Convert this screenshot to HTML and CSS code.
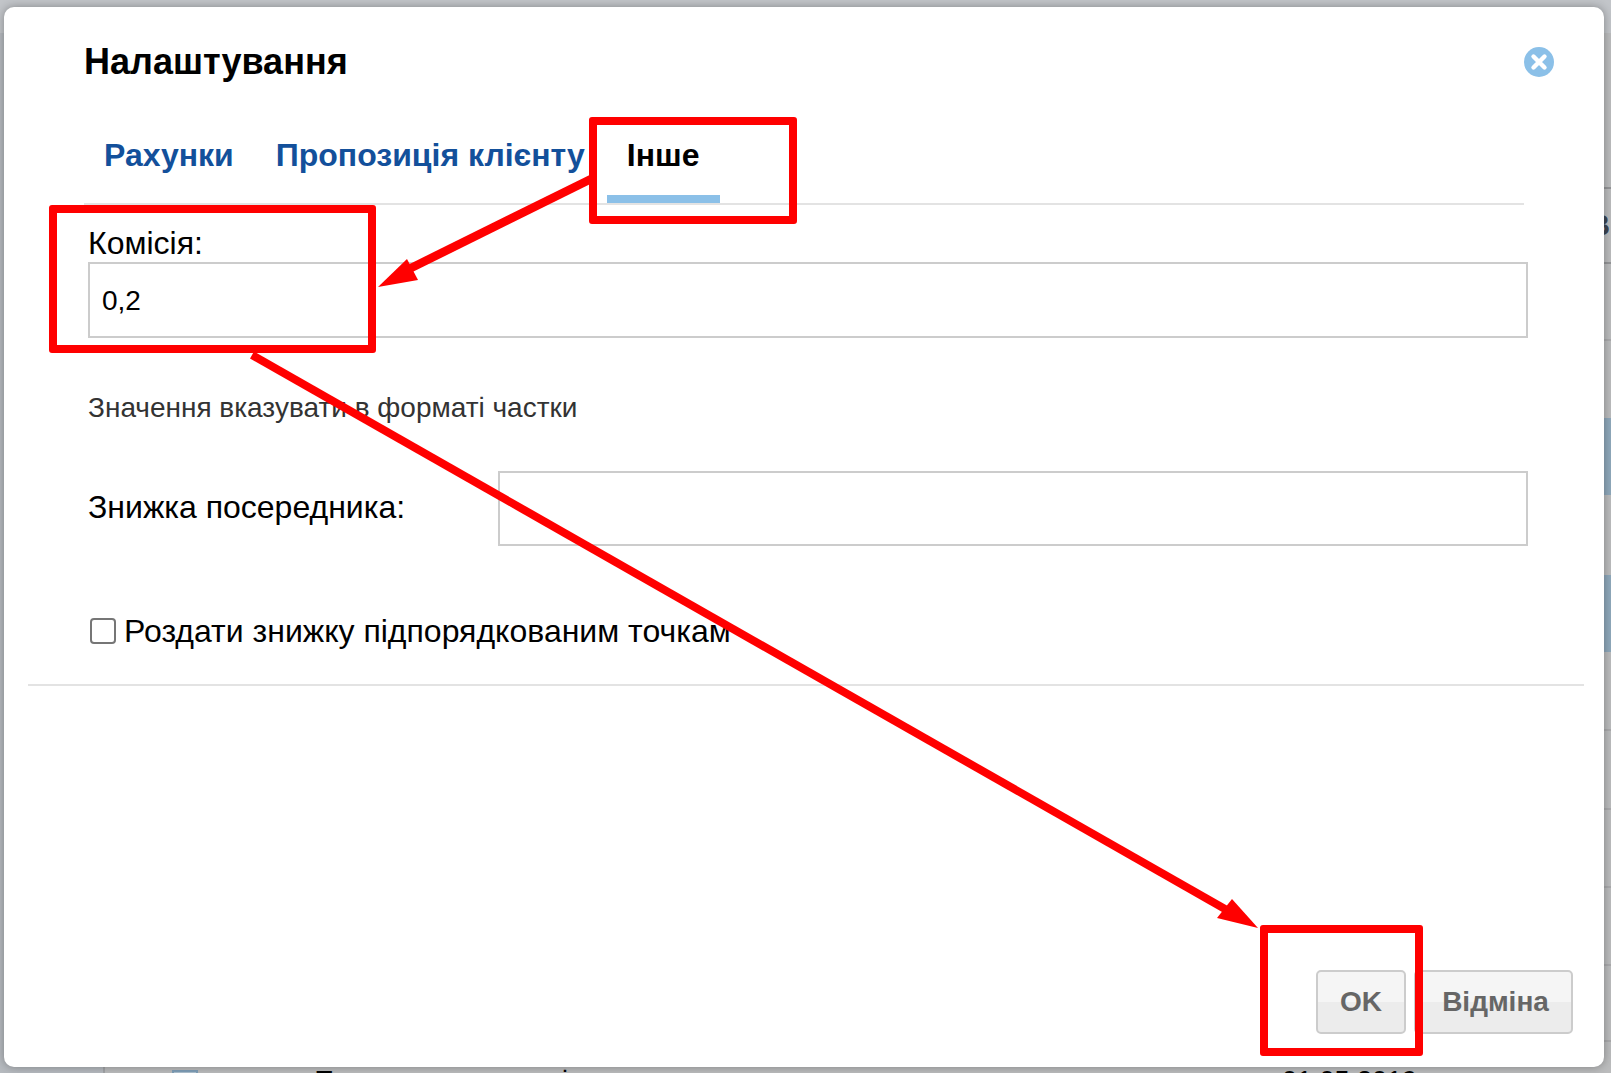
FILE: index.html
```html
<!DOCTYPE html>
<html lang="uk">
<head>
<meta charset="utf-8">
<title>Налаштування</title>
<link rel="stylesheet" href="styles.css">
</head>
<body>
<div class="backdrop">
  <div class="topbar"></div>
  <div class="sidebar"></div>
  <div class="strip line-dark line-1"></div>
  <div class="strip line-dark line-2"></div>
  <div class="strip line-soft line-3"></div>
  <div class="strip tint tint-1"></div>
  <div class="strip tint tint-2"></div>
  <div class="strip line-soft line-4"></div>
  <div class="strip line-soft line-5"></div>
  <div class="strip line-soft line-6"></div>
  <div class="strip line-soft line-7"></div>
  <div class="strip line-soft line-8"></div>
  <span class="peek-letter">В</span>
  <div class="bottom-peek">
    <span class="peek-icon"></span>
    <span class="peek-name">Торгова точка в селі</span>
    <span class="peek-date">01.05.2019</span>
  </div>
</div>
<main class="modal">
  <header class="modal-head">
    <h1 class="modal-title">Налаштування</h1>
    <svg class="close-icon" viewBox="0 0 30 30" aria-hidden="true"><circle cx="15" cy="15" r="15" fill="#8bc0e8"/><path d="M9.5 9.5l11 11M20.5 9.5l-11 11" stroke="#fff" stroke-width="4.4" stroke-linecap="round"/></svg>
  </header>
  <nav class="tabs">
    <a class="tab tab-one">Рахунки</a>
    <a class="tab tab-two">Пропозиція клієнту</a>
    <a class="tab tab-active">Інше</a>
  </nav>
  <section class="form">
    <label class="field-label">Комісія:</label>
    <div class="input input-main">0,2</div>
    <p class="hint">Значення вказувати в форматі частки</p>
    <div class="row">
      <label class="row-label">Знижка посередника:</label>
      <div class="input input-row"></div>
    </div>
    <div class="check-row">
      <span class="checkbox"></span>
      <label class="check-label">Роздати знижку підпорядкованим точкам</label>
    </div>
  </section>
  <div class="divider"></div>
  <footer class="actions">
    <button class="btn btn-ok">OK</button>
    <button class="btn btn-cancel">Відміна</button>
  </footer>
</main>
<div class="mark mark-tab"></div>
<div class="mark mark-field"></div>
<div class="mark mark-ok"></div>
<svg class="arrows" viewBox="0 0 1611 1073" aria-hidden="true">
  <line x1="591" y1="179" x2="403" y2="272" stroke="#f00" stroke-width="8.5"/>
  <polygon points="378,287 407,259 418,280" fill="#f00"/>
  <line x1="252" y1="355" x2="1232" y2="913" stroke="#f00" stroke-width="8"/>
  <polygon points="1258,928 1217,918 1232,899" fill="#f00"/>
</svg>
</body>
</html>
```
FILE: styles.css
```css
* { box-sizing: border-box; }
html, body { margin: 0; height: 100%; }
body {
  width: 1611px;
  height: 1073px;
  position: relative;
  overflow: hidden;
  background: #bbbcbd;
  font-family: "Liberation Sans", Arial, sans-serif;
  color: #000;
}
.backdrop { position: absolute; inset: 0; }
.topbar { position: absolute; left: 0; right: 0; top: 0; height: 33px; background: #c2c5c9; }
.sidebar { position: absolute; left: 0; top: 33px; bottom: 0; width: 105px; background: #b6babf; border-right: 2px solid #a2a4a7; }
.strip { position: absolute; right: 0; width: 8px; }
.line-dark { height: 2px; background: #959698; }
.line-soft { height: 2px; background: #aaabad; }
.tint { height: 77px; background: #8fa8bb; }
.line-1 { top: 187px; }
.line-2 { top: 262px; }
.line-3 { top: 339px; }
.tint-1 { top: 418px; }
.tint-2 { top: 575px; }
.line-4 { top: 729px; }
.line-5 { top: 808px; }
.line-6 { top: 886px; }
.line-7 { top: 964px; }
.line-8 { top: 1040px; }
.peek-letter { position: absolute; top: 209px; left: 1589px; font-size: 29px; font-weight: 700; color: #3c4450; }
.bottom-peek { position: absolute; left: 107px; right: 0; top: 1067px; height: 6px; overflow: hidden; font-size: 27px; line-height: 30px; }
.peek-icon { position: absolute; left: 65px; top: 3px; width: 26px; height: 20px; border: 2px solid #7f9fb8; background: #aec0cf; }
.peek-name { position: absolute; left: 209px; top: -1px; white-space: nowrap; }
.peek-date { position: absolute; left: 1175px; top: -1px; }

.modal {
  position: absolute;
  left: 4px;
  top: 7px;
  width: 1600px;
  height: 1060px;
  background: #fff;
  border-radius: 10px;
  box-shadow: 0 0 10px rgba(0, 0, 0, .32);
  display: flex;
  flex-direction: column;
}
.modal-head {
  height: 110px;
  padding: 32px 50px 0 80px;
  display: flex;
  justify-content: space-between;
  align-items: flex-start;
  flex: none;
}
.modal-title { margin: 0; font-size: 36px; line-height: 46px; font-weight: 700; }
.close-icon { width: 30px; height: 30px; margin-top: 8px; }
.tabs {
  margin: 0 80px;
  height: 88px;
  border-bottom: 2px solid #e3e3e3;
  display: flex;
  flex: none;
  padding-top: 17px;
}
.tab { font-size: 32px; font-weight: 700; line-height: 42px; color: #13509b; height: 69px; }
.tab-one { margin-left: 20px; }
.tab-two { margin-left: 42px; }
.tab-active { color: #000; margin-left: 22px; padding: 0 20px; width: 113px; border-bottom: 8px solid #8bc0e8; }
.form { padding: 19px 76px 0 84px; flex: none; }
.field-label { display: block; font-size: 32px; line-height: 38px; }
.input { border: 2px solid #ccc; background: #fff; height: 76px; }
.input-main { padding: 0 12px; font-size: 28px; line-height: 74px; }
.hint { margin: 52px 0 0; font-size: 28px; line-height: 36px; color: #333; }
.row { display: flex; align-items: center; margin-top: 45px; justify-content: space-between; }
.row-label { font-size: 32px; line-height: 40px; margin-bottom: 4px; }
.input-row { width: 1030px; height: 75px; }
.check-row { display: flex; align-items: center; margin-top: 65px; }
.checkbox { width: 26px; height: 26px; border: 2px solid #767676; border-radius: 4px; margin: 0 8px 0 2px; flex: none; }
.check-label { font-size: 32px; line-height: 40px; }
.divider { margin: 33px 20px 0 24px; height: 2px; background: #e3e3e3; flex: none; }
.actions { margin-top: auto; padding: 0 31px 33px 0; display: flex; justify-content: flex-end; gap: 8px; }
.btn {
  height: 64px;
  border: 2px solid #ccc;
  border-radius: 5px;
  background: linear-gradient(#f5f5f5 50%, #ececec 50%);
  color: #666;
  font: 700 28px "Liberation Sans", Arial, sans-serif;
  padding: 0;
}
.btn-ok { width: 90px; }
.btn-cancel { width: 159px; padding-left: 4px; }

.mark { position: absolute; border: 8px solid #f00; border-radius: 3px; }
.mark-tab { left: 589px; top: 117px; width: 208px; height: 107px; }
.mark-field { left: 49px; top: 205px; width: 327px; height: 148px; }
.mark-ok { left: 1260px; top: 925px; width: 163px; height: 131px; }
.arrows { position: absolute; left: 0; top: 0; width: 1611px; height: 1073px; pointer-events: none; }
```
